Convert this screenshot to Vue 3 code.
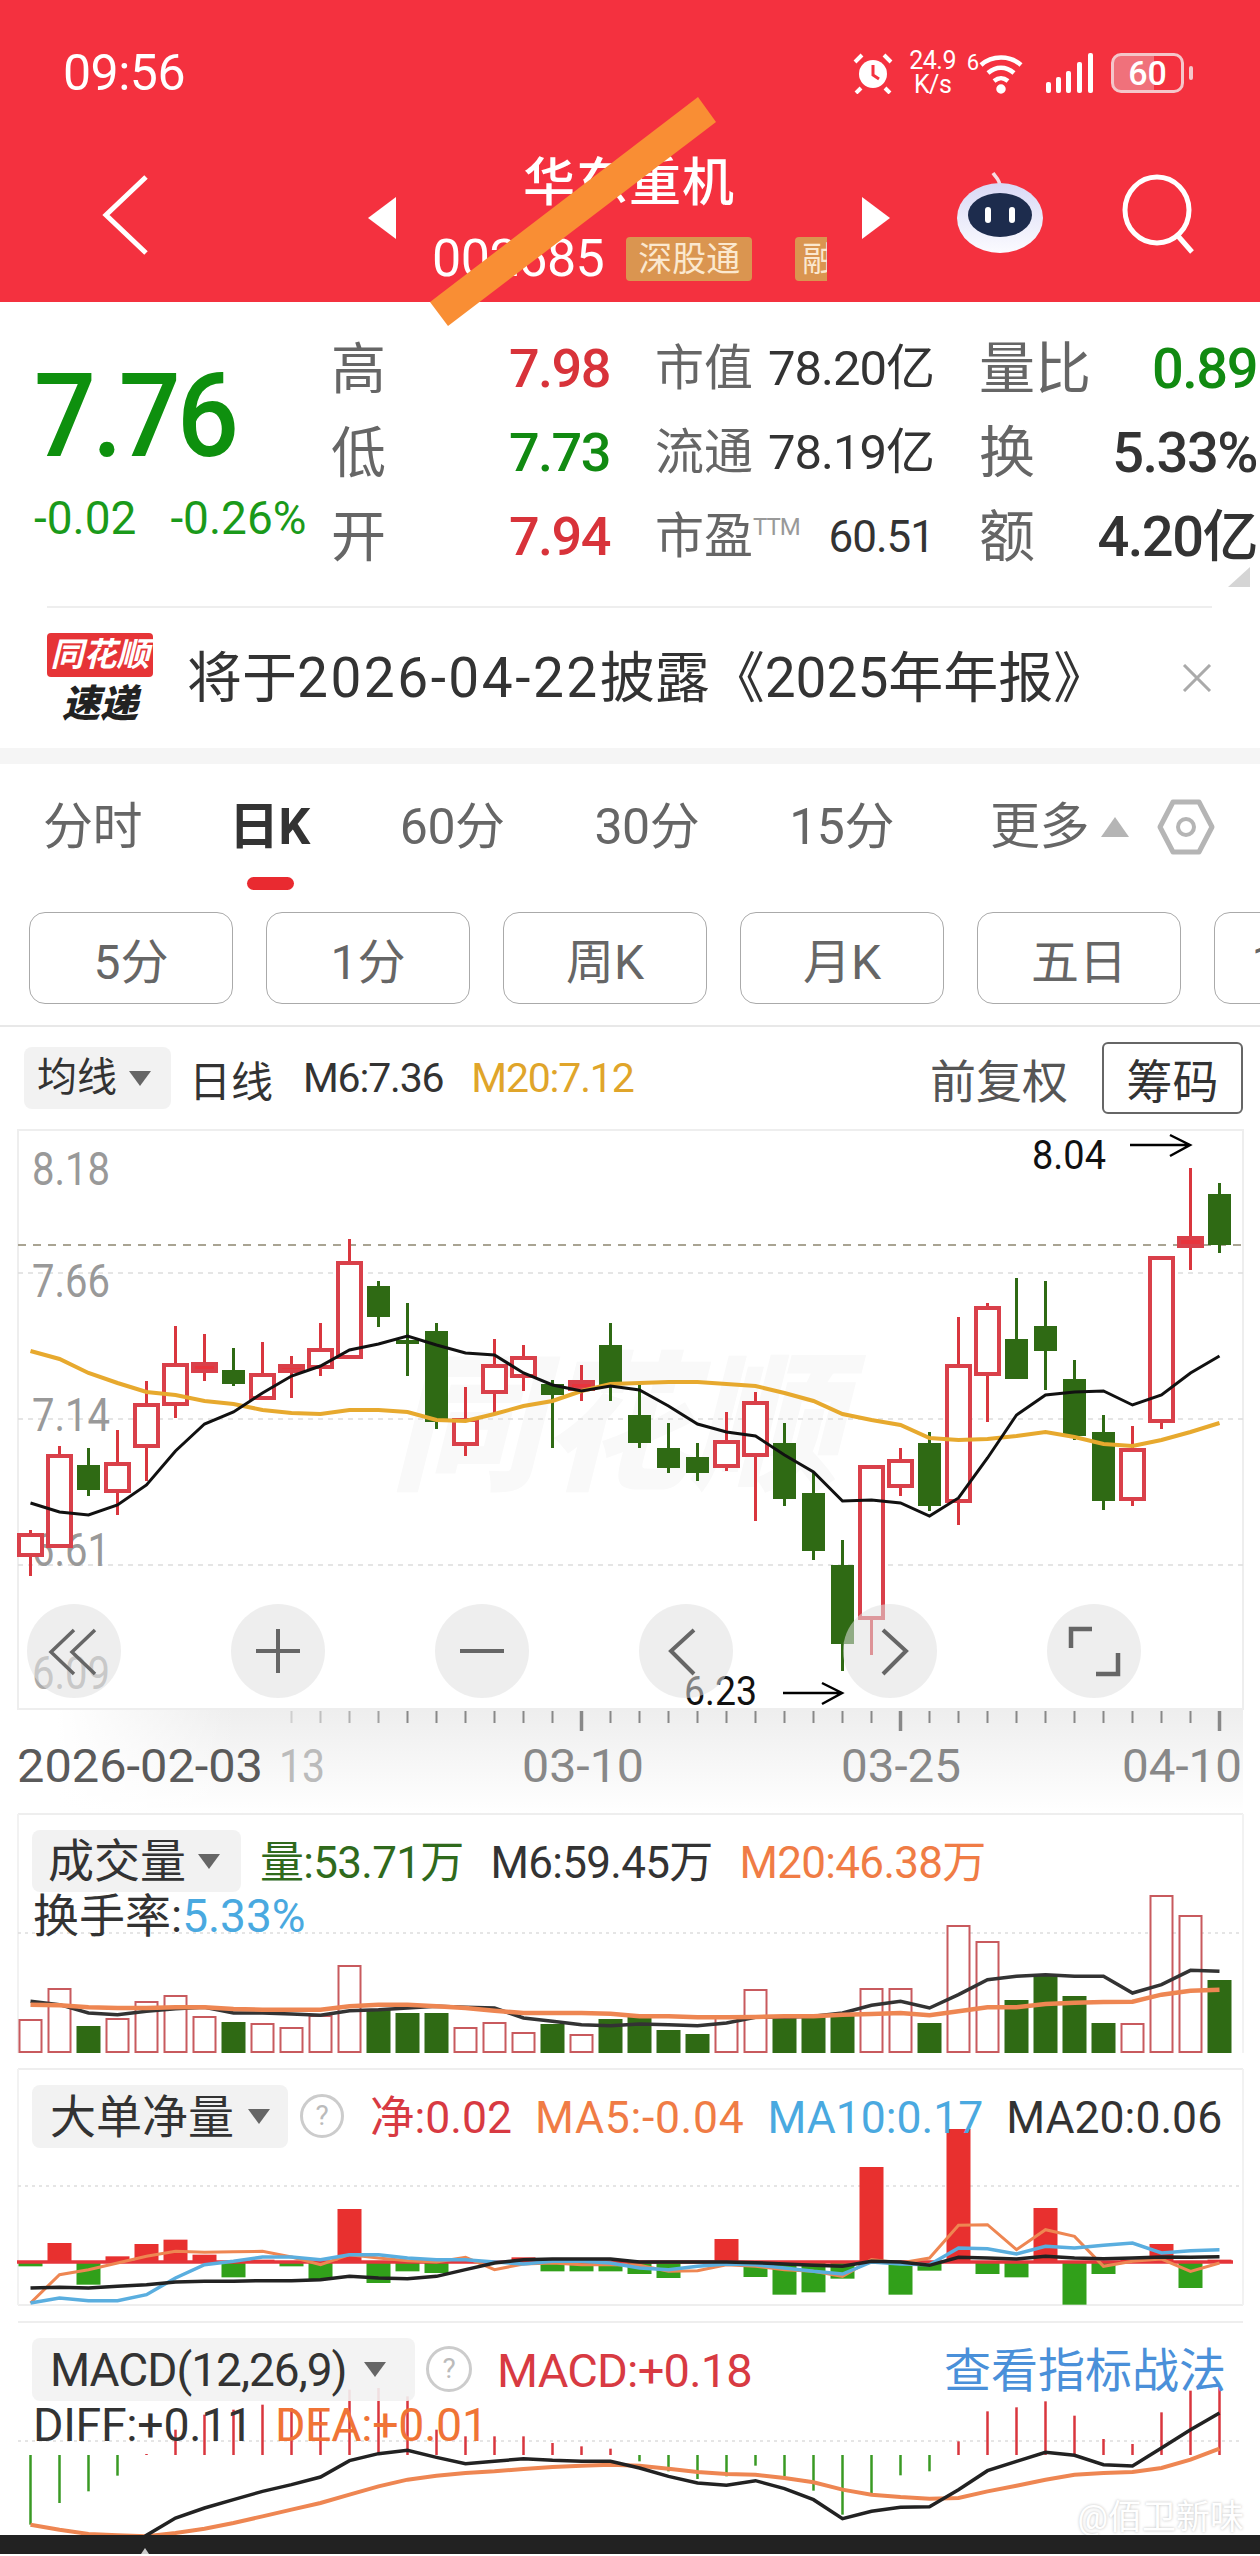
<template>
  <div class="phone">
    <header class="top">
      <div class="status">
        <span class="time">09:56</span>
        <div class="status-icons">
          <svg width="40" height="42" viewBox="0 0 40 42">
            <circle cx="20" cy="22" r="14" fill="#fff" />
            <path d="M20 13v10l6 4" stroke="#f4313f" stroke-width="3" fill="none" />
            <path d="M2 10 9 3M38 10 31 3M8 36l-5 5M32 36l5 5" stroke="#fff" stroke-width="4" />
          </svg>
          <div class="speed"><span>24.9</span><span>K/s</span></div>
          <span class="six">6</span>
          <svg width="44" height="42" viewBox="0 0 44 42" fill="none" stroke="#fff" stroke-width="4.5">
            <path d="M2 13C13 3 31 3 42 13" />
            <path d="M9 21c8-7 18-7 26 0" />
            <path d="M15 29c5-4 9-4 14 0" />
            <circle cx="22" cy="37" r="2.5" fill="#fff" />
          </svg>
          <svg class="signal" width="48" height="40" viewBox="0 0 48 40" fill="#fff">
            <rect x="0" y="29" width="5" height="11" rx="2" />
            <rect x="10" y="24" width="5" height="16" rx="2" />
            <rect x="20" y="18" width="5" height="22" rx="2" />
            <rect x="31" y="9" width="5" height="31" rx="2" />
            <rect x="42" y="0" width="5" height="40" rx="2" />
          </svg>
          <div class="battery"><span>60</span></div>
          <i class="nub"></i>
        </div>
      </div>
      <nav class="nav">
        <svg class="back" width="50" height="84" viewBox="0 0 50 84" fill="none" stroke="#fff" stroke-width="5">
          <path d="M45 3 5 41l40 38" />
        </svg>
        <i class="tri tri-left"></i>
        <div class="stock">
          <div class="stock-name">华东重机</div>
          <div class="stock-code">
            <span>002685</span>
            <em class="tag">深股通</em>
            <em class="tag tag-cut">融</em>
          </div>
        </div>
        <i class="tri tri-right"></i>
        <svg class="robot" width="90" height="82" viewBox="0 0 90 82">
          <defs>
            <linearGradient id="robotHead" x1="0" y1="0" x2="0" y2="1">
              <stop offset="0" stop-color="#d9d9f5" />
              <stop offset="1" stop-color="#fbfbff" />
            </linearGradient>
          </defs>
          <path d="M44 16C44 8 40 7 37 2" stroke="#f7dbe2" stroke-width="3.5" fill="none" />
          <ellipse cx="44" cy="47" rx="43" ry="35" fill="url(#robotHead)" />
          <ellipse cx="44" cy="44" rx="32" ry="22" fill="#1d2c4d" />
          <rect x="29" y="36" width="6" height="16" rx="3" fill="#fff" />
          <rect x="53" y="36" width="6" height="16" rx="3" fill="#fff" />
        </svg>
        <svg class="search" width="76" height="82" viewBox="0 0 76 82" fill="none" stroke="#fff" stroke-width="5">
          <ellipse cx="35" cy="36" rx="32" ry="33" />
          <path d="M56 62 70 78" />
        </svg>
      </nav>
    </header>

    <section class="quote">
      <div class="price">
        <div class="price-now">7.76</div>
        <div class="price-change"><span>-0.02</span><span>-0.26%</span></div>
      </div>
      <div class="quote-grid">
        <template v-for="row in quoteRows" :key="row.low">
          <div v-for="cell in row.cells" :key="cell.label" class="cell" :class="cell.cls">
            <span class="cell-label">{{ cell.label }}<sup v-if="cell.sup">{{ cell.sup }}</sup></span>
            <span class="cell-value" :class="cell.tone">{{ cell.value }}</span>
          </div>
        </template>
      </div>
      <i class="corner"></i>
    </section>

    <section class="news">
      <div class="news-logo">
        <div class="news-logo-top">同花顺</div>
        <div class="news-logo-bottom">速递</div>
      </div>
      <p class="news-text">将于<span class="news-date">2026-04-22</span>披露《2025年年报》</p>
      <svg class="news-close" width="30" height="28" viewBox="0 0 30 28" stroke="#aaa" stroke-width="3">
        <path d="M2 1 28 27M28 1 2 27" />
      </svg>
    </section>
    <div class="band"></div>

    <div class="tabs">
      <span v-for="tab in tabs" :key="tab" class="tab" :class="{ active: tab === '日K', more: tab === '更多' }">{{ tab }}</span>
      <i class="tab-up"></i>
      <svg class="hex" width="58" height="56" viewBox="0 0 58 56" fill="none" stroke="#b5b5b5">
        <path d="M16 3h26l13 25-13 25H16L3 28z" stroke-width="5" stroke-linejoin="round" />
        <circle cx="29" cy="28" r="8" stroke-width="4" />
      </svg>
    </div>
    <div class="periods">
      <button v-for="p in periods" :key="p" class="period">{{ p }}</button>
    </div>

    <div class="kline-head">
      <div class="chip chip-ma">均线<i class="caret"></i></div>
      <span class="kl-day">日线</span>
      <span class="kl-m6">M6:7.36</span>
      <span class="kl-m20">M20:7.12</span>
      <span class="kl-adj">前复权</span>
      <button class="kl-chip">筹码</button>
    </div>

    <div class="kline">
      <svg class="chart" width="1260" height="581" viewBox="0 1131 1260 581">
        <rect x="18" y="1132" width="1225" height="579" fill="#fff" stroke="#eee" stroke-width="2" />
        <text x="390" y="1480" class="mark">同花顺</text>
        <path v-for="y in [1275, 1421, 1567]" :key="y" :d="`M18 ${y}H1243`" stroke="#ddd" stroke-width="1.5" stroke-dasharray="5 5" />
        <path d="M18 1247H1243" stroke="#a9a493" stroke-width="2" stroke-dasharray="8 7" />
        <text v-for="l in priceLabels" :key="l.t" x="32" :y="l.y" :fill="l.c" class="axis-num" textLength="78" lengthAdjust="spacingAndGlyphs">{{ l.t }}</text>
        <g v-for="c in candles" :key="c.x">
          <path :d="`M${c.x} ${c.hi}V${c.lo}`" :stroke="c.up ? '#d9363e' : '#2f6a14'" stroke-width="3" />
          <rect
            v-if="c.up"
            :x="c.x - 11.5"
            :y="c.top"
            width="23"
            :height="c.bot - c.top"
            :fill="c.bot - c.top < 12 ? '#e8343c' : '#fff'"
            stroke="#d9404a"
            stroke-width="4"
          />
          <rect v-else :x="c.x - 11.5" :y="c.top" width="23" :height="c.bot - c.top" fill="#2f6a14" />
        </g>
        <polyline :points="m20Line" fill="none" stroke="#e7a92e" stroke-width="4" />
        <polyline :points="m6Line" fill="none" stroke="#111" stroke-width="3" />
        <text x="1032" y="1171" class="peak" textLength="74" lengthAdjust="spacingAndGlyphs">8.04</text>
        <path d="M1130 1147h59M1170 1137l20 10-20 11" fill="none" stroke="#000" stroke-width="2.5" />
        <text x="684" y="1707" class="peak" textLength="73" lengthAdjust="spacingAndGlyphs">6.23</text>
        <path d="M783 1695h59M822 1685l20 10-20 11" fill="none" stroke="#000" stroke-width="2.5" />
      </svg>
      <div class="kline-tools">
        <span v-for="t in tools" :key="t.name" class="tool">
          <svg width="94" height="94" viewBox="0 0 94 94" fill="none" stroke="#666" :stroke-width="t.w">
            <path :d="t.d" />
          </svg>
        </span>
      </div>
    </div>

    <div class="axis">
      <svg class="chart" width="1226" height="103" viewBox="17 1712 1226 103">
        <path v-for="t in ticks" :key="t.x" :d="`M${t.x} 1713V${t.end}`" stroke="#888" :stroke-width="t.w" :opacity="t.o" />
        <text x="17" y="1784" class="date date-first" textLength="246" lengthAdjust="spacingAndGlyphs">2026-02-03</text>
        <text x="279" y="1784" class="date date-fade" textLength="46" lengthAdjust="spacingAndGlyphs">13</text>
        <text x="522" y="1784" class="date" textLength="122" lengthAdjust="spacingAndGlyphs">03-10</text>
        <text x="841" y="1784" class="date" textLength="120" lengthAdjust="spacingAndGlyphs">03-25</text>
        <text x="1122" y="1784" class="date" textLength="120" lengthAdjust="spacingAndGlyphs">04-10</text>
      </svg>
    </div>

    <div class="panel panel-vol">
      <svg class="chart" width="1260" height="240" viewBox="0 1815 1260 240">
        <path d="M18 1816H1243" stroke="#eee" stroke-width="2" />
        <path d="M18 1816V2055M1243 1816V2055" stroke="#f2f2f2" stroke-width="2" />
        <path d="M18 1935H1243" stroke="#ddd" stroke-width="1.5" stroke-dasharray="3 4" />
        <template v-for="b in volBars" :key="b.x">
          <rect v-if="b.up" :x="b.x - 11" :y="b.top" width="22" :height="2054 - b.top" fill="#fff" stroke="#c85a5e" stroke-width="2" />
          <rect v-else :x="b.x - 12" :y="b.top" width="24" :height="2055 - b.top" fill="#2f6a14" />
        </template>
        <polyline :points="volM6" fill="none" stroke="#333" stroke-width="3.5" />
        <polyline :points="volM20" fill="none" stroke="#ee8652" stroke-width="4.5" />
      </svg>
      <div class="legend">
        <div class="chip chip-vol">成交量<i class="caret"></i></div>
        <div class="legend-col">
          <div class="legend-row">
            <span class="c-green">量:53.71万</span>
            <span class="c-dark">M6:59.45万</span>
            <span class="c-orange">M20:46.38万</span>
          </div>
        </div>
      </div>
      <div class="legend-second c-dark">换手率:<span class="c-blue">5.33%</span></div>
    </div>

    <div class="panel panel-net">
      <svg class="chart" width="1260" height="238" viewBox="0 2070 1260 238">
        <path d="M18 2071H1243M18 2307H1243" stroke="#eee" stroke-width="2" />
        <path d="M18 2071V2307M1243 2071V2307" stroke="#f2f2f2" stroke-width="2" />
        <path d="M18 2188H1243" stroke="#ddd" stroke-width="1.5" stroke-dasharray="3 4" />
        <rect v-for="b in netBars" :key="b.x" :x="b.x - 12" :y="b.y" width="24" :height="b.h" :fill="b.up ? '#e8302f' : '#31a01a'" />
        <path d="M17 2264H1233" stroke="#e4343a" stroke-width="3.5" />
        <polyline :points="netMa5" fill="none" stroke="#ee8652" stroke-width="3" />
        <polyline :points="netMa10" fill="none" stroke="#5aaedf" stroke-width="3.5" />
        <polyline :points="netMa20" fill="none" stroke="#222" stroke-width="3.5" />
      </svg>
      <div class="legend">
        <div class="chip chip-net">大单净量<i class="caret"></i></div>
        <span class="qmark">?</span>
        <div class="legend-row legend-row-net">
          <span class="c-red">净:0.02</span>
          <span class="c-orange net-ma5">MA5:-0.04</span>
          <span class="c-blue">MA10:0.17</span>
          <span class="c-dark">MA20:0.06</span>
        </div>
      </div>
    </div>

    <div class="panel panel-macd">
      <svg class="chart" width="1260" height="214" viewBox="0 2323 1260 214">
        <path d="M18 2324H1243" stroke="#eee" stroke-width="2" />
        <path d="M18 2443H1243" stroke="#ddd" stroke-width="1.5" stroke-dasharray="3 4" />
        <path v-for="b in macdBars" :key="b.x" :d="`M${b.x} 2457V${b.end}`" :stroke="b.up ? '#d9363e' : '#3a9a24'" stroke-width="2.5" />
        <polyline :points="macdDea" fill="none" stroke="#ee8652" stroke-width="4" />
        <polyline :points="macdDiff" fill="none" stroke="#222" stroke-width="3.5" />
      </svg>
      <div class="legend">
        <div class="chip chip-macd">MACD(12,26,9)<i class="caret"></i></div>
        <span class="qmark qmark-lg">?</span>
        <span class="c-red macd-val">MACD:+0.18</span>
        <span class="macd-link">查看指标战法</span>
      </div>
      <div class="legend-second legend-macd">
        <span class="c-dark">DIFF:+0.11</span>
        <span class="c-orange2">DEA:+0.01</span>
      </div>
      <div class="credit">@佰卫新味</div>
    </div>

    <footer class="bottom"><i></i></footer>

    <svg class="stripe" width="300" height="240" viewBox="0 0 300 240">
      <polygon points="272,2 290,27 22,231 4,207" fill="#f98e34" />
    </svg>
  </div>
</template>

<script setup>
const quoteRows = [
  {
    low: 'high',
    cells: [
      { label: '高', value: '7.98', tone: 'c-up', cls: 'c1' },
      { label: '市值', value: '78.20亿', tone: 'c-text', cls: 'c2' },
      { label: '量比', value: '0.89', tone: 'c-down', cls: 'c3' },
    ],
  },
  {
    low: 'low',
    cells: [
      { label: '低', value: '7.73', tone: 'c-down', cls: 'c1' },
      { label: '流通', value: '78.19亿', tone: 'c-text', cls: 'c2' },
      { label: '换', value: '5.33%', tone: 'c-text', cls: 'c3' },
    ],
  },
  {
    low: 'open',
    cells: [
      { label: '开', value: '7.94', tone: 'c-up', cls: 'c1' },
      { label: '市盈', sup: 'TTM', value: '60.51', tone: 'c-text', cls: 'c2 small' },
      { label: '额', value: '4.20亿', tone: 'c-text', cls: 'c3' },
    ],
  },
]

const tabs = ['分时', '日K', '60分', '30分', '15分', '更多']
const periods = ['5分', '1分', '周K', '月K', '五日', '120分']

const tools = [
  { name: 'start', w: 3.5, d: 'M47 26 24 48l23 22M68 26 45 48l23 22' },
  { name: 'plus', w: 4, d: 'M25 47h44M47 25v44' },
  { name: 'minus', w: 4, d: 'M25 47h44' },
  { name: 'left', w: 4, d: 'M55 26 32 47l23 23' },
  { name: 'right', w: 4, d: 'M40 26l23 21-23 23' },
  { name: 'full', w: 4.5, d: 'M24 44V25h21M49 70h22V49' },
]

const priceLabels = [
  { t: '8.18', y: 1187, c: '#999' },
  { t: '7.66', y: 1299, c: '#999' },
  { t: '7.14', y: 1433, c: '#999' },
  { t: '6.61', y: 1568, c: '#999' },
  { t: '6.09', y: 1691, c: '#aaa' },
]

const xAt = (i) => 30.5 + 29 * i

// hi, top, bottom, lo, up
const raw = [
  [1532, 1537, 1557, 1578, 1], [1448, 1458, 1548, 1550, 1], [1450, 1467, 1492, 1498, 0],
  [1432, 1466, 1493, 1517, 1], [1383, 1407, 1448, 1483, 1], [1328, 1367, 1406, 1420, 1],
  [1336, 1366, 1373, 1383, 1], [1350, 1372, 1386, 1388, 0], [1344, 1377, 1400, 1401, 1],
  [1358, 1368, 1373, 1400, 1], [1325, 1352, 1369, 1378, 1], [1241, 1265, 1359, 1359, 1],
  [1283, 1288, 1319, 1329, 0], [1305, 1342, 1346, 1378, 0], [1325, 1333, 1424, 1431, 0],
  [1389, 1422, 1446, 1458, 1], [1341, 1368, 1394, 1417, 1], [1347, 1360, 1378, 1393, 1],
  [1382, 1386, 1397, 1450, 0], [1367, 1384, 1391, 1403, 1], [1325, 1347, 1387, 1403, 0],
  [1387, 1417, 1445, 1450, 0], [1425, 1450, 1470, 1475, 0], [1445, 1459, 1475, 1483, 0],
  [1414, 1444, 1468, 1473, 1], [1394, 1405, 1457, 1523, 1], [1425, 1445, 1501, 1508, 0],
  [1475, 1495, 1553, 1562, 0], [1542, 1567, 1646, 1673, 0], [1469, 1469, 1620, 1657, 1],
  [1450, 1463, 1488, 1498, 1], [1434, 1445, 1508, 1513, 0], [1319, 1368, 1503, 1527, 1],
  [1305, 1310, 1376, 1424, 1], [1280, 1341, 1381, 1381, 0], [1283, 1328, 1353, 1392, 0],
  [1362, 1381, 1438, 1442, 0], [1417, 1434, 1503, 1512, 0], [1428, 1452, 1501, 1508, 1],
  [1258, 1260, 1423, 1431, 1], [1170, 1240, 1248, 1272, 1], [1185, 1196, 1247, 1255, 0],
]
const candles = raw.map((r, i) => ({ x: xAt(i), hi: r[0], top: r[1], bot: r[2], lo: r[3], up: r[4] === 1 }))

const toLine = (ys, start = 0) => ys.map((y, i) => `${xAt(i + start)},${y}`).join(' ')

const m6Line = toLine([
  1505, 1514, 1517, 1507, 1487, 1453, 1426, 1414, 1395, 1378, 1368, 1352, 1346, 1338, 1347, 1355, 1357, 1375, 1387, 1393,
  1388, 1392, 1408, 1426, 1434, 1438, 1457, 1474, 1503, 1502, 1505, 1518, 1500, 1460, 1417, 1397, 1394, 1393, 1407, 1397,
  1375, 1358,
])
const m20Line = toLine([
  1353, 1361, 1375, 1385, 1394, 1397, 1403, 1406, 1412, 1415, 1416, 1412, 1412, 1414, 1422, 1423, 1416, 1408, 1403, 1393,
  1386, 1385, 1384, 1384, 1386, 1388, 1395, 1403, 1416, 1422, 1427, 1440, 1442, 1441, 1438, 1434, 1439, 1446, 1448, 1442,
  1434, 1425,
])

const ticks = []
for (let i = 9; i <= 41; i++) {
  const major = i === 19 || i === 30 || i === 41
  ticks.push({ x: xAt(i), end: major ? 1733 : 1725, w: major ? 3.5 : 2, o: i < 13 ? 0.3 + (i - 9) * 0.15 : 1 })
}

const volTop = [
  2022, 1991, 2028, 2021, 2004, 1998, 2019, 2024, 2026, 2030, 2018, 1968, 2012, 2015, 2015, 2030, 2025, 2035, 2026, 2037,
  2021, 2018, 2032, 2036, 2018, 1992, 2017, 2018, 2017, 1991, 1991, 2025, 1928, 1944, 2002, 1978, 1998, 2025, 2026, 1898,
  1918, 1982,
]
const volGreen = [2, 7, 12, 13, 14, 18, 20, 21, 22, 23, 26, 27, 28, 31, 34, 35, 36, 37, 41]
const volBars = volTop.map((top, i) => ({ x: xAt(i), top, up: !volGreen.includes(i) }))

// the two panels below were read off a 3x crop, hence the z / 3
const zLine = (base, zs, start = 0) => toLine(zs.map((z) => base + z / 3), start)

const volM6 = zLine(1800, [
  610, 620, 645, 650, 640, 632, 628, 645, 645, 648, 652, 638, 635, 630, 625, 628, 630, 660, 670, 680, 683, 678, 680, 683,
  675, 658, 658, 655, 645, 622, 610, 630, 590, 545, 535, 530, 535, 535, 585, 560, 517, 520,
])
const volM20 = zLine(1800, [
  620, 622, 628, 630, 630, 628, 628, 633, 635, 635, 635, 625, 620, 620, 625, 630, 638, 645, 645, 645, 647, 655, 655, 658,
  658, 657, 655, 655, 650, 648, 645, 652, 640, 628, 628, 618, 614, 612, 611, 590, 578, 575,
])

const netZ = [
  625, 555, 680, 595, 558, 545, 590, 658, 605, 625, 665, 453, 675, 640, 645, 605, 610, 598, 640, 640, 640, 648, 660, 610,
  543, 657, 710, 703, 662, 327, 710, 638, 213, 648, 658, 450, 740, 648, 605, 558, 690, 605,
]
const netBars = netZ.map((z, i) => {
  const y = 2060 + z / 3
  return z < 612 ? { x: xAt(i), y, h: 2264 - y, up: true } : { x: xAt(i), y: 2264, h: y - 2264, up: false }
})
const netMa5 = zLine(2060, [
  735, 650, 635, 615, 595, 580, 583, 581, 580, 597, 620, 590, 600, 608, 612, 598, 635, 618, 615, 620, 620, 622, 640, 638,
  620, 625, 635, 640, 655, 605, 615, 600, 502, 500, 575, 515, 535, 625, 610, 603, 640, 615,
])
const netMa10 = zLine(2060, [
  735, 720, 728, 728, 710, 660, 620, 610, 597, 597, 605, 590, 590, 600, 605, 605, 612, 618, 610, 610, 615, 630, 635, 625,
  618, 620, 630, 640, 648, 612, 618, 620, 570, 572, 588, 565, 570, 562, 555, 585, 578, 575,
])
const netMa20 = zLine(2060, [
  690, 688, 690, 685, 680, 672, 670, 670, 668, 668, 665, 655, 660, 662, 655, 635, 615, 605, 603, 603, 603, 612, 612, 612,
  612, 614, 618, 622, 625, 610, 612, 622, 598, 600, 603, 595, 600, 602, 600, 597, 598, 596,
])

const macdZ = [
  680, 615, 580, 533, 468, 395, 350, 335, 320, 330, 335, 275, 270, 295, 395, 415, 415, 415, 435, 445, 452, 490, 520, 543,
  535, 503, 535, 578, 650, 585, 532, 520, 430, 340, 328, 310, 353, 423, 438, 343, 278, 265,
]
const macdBars = macdZ.map((z, i) => ({ x: xAt(i), end: 2300 + z / 3, up: z < 470 }))
const macdDiff = zLine(2300, [
  770, 770, 770, 770, 712, 660, 630, 605, 580, 560, 537, 488, 467, 457, 478, 497, 490, 482, 487, 490, 490, 510, 535, 555,
  562, 548, 572, 605, 662, 640, 628, 626, 575, 518, 490, 463, 472, 500, 504, 450, 395, 345,
])
const macdDea = zLine(2300, [
  680, 695, 708, 712, 715, 705, 692, 675, 655, 635, 615, 590, 565, 545, 533, 525, 520, 513, 507, 503, 500, 503, 512, 522,
  528, 530, 540, 553, 575, 590, 597, 602, 600, 580, 563, 545, 530, 525, 522, 510, 485, 452,
])
</script>

<style>
html,
body {
  margin: 0;
  background: #fff;
}
</style>

<style scoped>
.phone {
  position: relative;
  width: 1260px;
  height: 2556px;
  overflow: hidden;
  background: #fff;
  font-family: Roboto, "Noto Sans CJK SC", sans-serif;
  color: #333;
}

.phone i,
.phone em {
  font-style: normal;
}

.top {
  height: 302px;
  background: #f4313f;
  color: #fff;
}

.status {
  display: flex;
  justify-content: space-between;
  height: 130px;
  box-sizing: border-box;
  padding: 48px 67px 0 63px;
}

.time {
  font-size: 50px;
  line-height: 50px;
  letter-spacing: -0.5px;
}

.status-icons {
  display: flex;
  align-items: center;
  height: 44px;
  margin-top: 3px;
}

.speed {
  display: flex;
  flex-direction: column;
  align-items: center;
  margin-left: 12px;
  width: 56px;
  font-size: 25px;
  line-height: 24px;
  letter-spacing: -0.5px;
}

.six {
  font-size: 22px;
  line-height: 20px;
  align-self: flex-start;
  margin: 2px 0 0 6px;
}

.signal {
  margin-left: 23px;
}

.battery {
  display: flex;
  align-items: center;
  justify-content: center;
  width: 73px;
  height: 40px;
  box-sizing: border-box;
  margin-left: 17px;
  border: 3px solid #f4c6ca;
  border-radius: 10px;
  background: linear-gradient(90deg, #f0717b 60%, transparent 60%);
  font-size: 34px;
  font-weight: 500;
}

.nub {
  width: 4px;
  height: 14px;
  margin-left: 5px;
  border-radius: 2px;
  background: #f4c6ca;
}

.nav {
  display: flex;
  align-items: center;
  height: 127px;
  padding-top: 24px;
}

.back {
  margin: 0 0 4px 101px;
}

.tri {
  width: 0;
  height: 0;
  border-top: 21px solid transparent;
  border-bottom: 21px solid transparent;
}

.tri-left {
  margin-left: 217px;
  border-right: 28px solid #fff;
}

.tri-right {
  border-left: 28px solid #fff;
}

.stock {
  width: 466px;
}

.stock-name {
  font-size: 52px;
  line-height: 60px;
  font-weight: 500;
  text-align: center;
  letter-spacing: 1px;
}

.stock-code {
  display: flex;
  align-items: center;
  width: 395px;
  height: 44px;
  margin: 23px 0 0 36px;
  overflow: hidden;
  font-size: 52px;
  line-height: 44px;
  letter-spacing: -0.5px;
}

.tag {
  flex: none;
  width: 126px;
  height: 44px;
  margin-left: 22px;
  border-radius: 4px;
  background: #da9550;
  color: #fbe8cf;
  font-size: 34px;
  text-align: center;
  letter-spacing: 0;
}

.tag-cut {
  margin-left: 43px;
  padding-left: 7px;
  text-align: left;
  box-sizing: border-box;
}

.robot {
  margin: 0 0 12px 66px;
}

.search {
  margin: 0 0 6px 76px;
}

.stripe {
  position: absolute;
  top: 95px;
  left: 426px;
}

.quote {
  position: relative;
  display: flex;
  height: 304px;
  box-sizing: border-box;
  border-bottom: 2px solid transparent;
}

.price {
  width: 333px;
  flex: none;
  box-sizing: border-box;
  padding: 56px 0 0 34px;
}

.price-now {
  font-size: 116px;
  line-height: 116px;
  font-weight: 500;
  color: #0e900e;
  letter-spacing: -4px;
  transform: scaleX(0.94);
  transform-origin: left center;
}

.price-change {
  display: flex;
  gap: 34px;
  margin-top: 19px;
  font-size: 46px;
  line-height: 50px;
  color: #1a9a1a;
}

.quote-grid {
  display: grid;
  grid-template-columns: 277px 277px 276px;
  column-gap: 47px;
  grid-auto-rows: 84px;
  padding-top: 25px;
}

.cell {
  display: flex;
  justify-content: space-between;
  align-items: center;
}

.cell-label {
  font-size: 55px;
  line-height: 60px;
  color: #666;
  margin-left: -2px;
}

.c2 .cell-label {
  font-size: 49px;
}

.c3 .cell-label {
  font-size: 56px;
}

.cell sup {
  font-size: 24px;
  line-height: 24px;
  vertical-align: 18px;
  letter-spacing: -1px;
  color: #999;
}

.cell-value {
  font-size: 54px;
  line-height: 60px;
  letter-spacing: -1.5px;
  white-space: nowrap;
}

.c2 .cell-value {
  font-size: 49px;
  letter-spacing: -1px;
}

.small .cell-value {
  font-size: 44px;
}

.c3 .cell-value {
  font-size: 56px;
  font-weight: 500;
}

.c1 .cell-value {
  font-weight: 500;
}

.c-up {
  color: #d8333a;
}

.c-down {
  color: #118a11;
}

.c-text {
  color: #333;
}

.corner {
  position: absolute;
  right: 10px;
  bottom: 17px;
  width: 0;
  height: 0;
  border-left: 22px solid transparent;
  border-bottom: 20px solid #d5d5d5;
}

.news {
  display: flex;
  align-items: center;
  height: 140px;
  margin: 0 48px 0 47px;
  border-top: 2px solid #eee;
}

.news-logo {
  width: 106px;
  flex: none;
  text-align: center;
}

.news-logo-top {
  height: 44px;
  border-radius: 4px;
  background: #e63437;
  color: #fff;
  font-size: 33px;
  line-height: 44px;
  font-weight: 700;
  font-style: italic;
}

.news-logo-bottom {
  margin-top: 8px;
  font-size: 38px;
  line-height: 38px;
  font-weight: 900;
  font-style: italic;
  color: #222;
}

.news-text {
  margin: 0 0 0 34px;
  flex: 1;
  font-size: 55px;
  line-height: 64px;
  color: #333;
  white-space: nowrap;
}

.news-date {
  letter-spacing: 2.5px;
}

.band {
  height: 16px;
  background: #f5f5f5;
}

.tabs {
  display: flex;
  align-items: center;
  gap: 90px;
  height: 126px;
  padding-left: 43px;
  box-sizing: border-box;
}

.tab {
  position: relative;
  font-size: 50px;
  line-height: 60px;
  color: #666;
  letter-spacing: -0.5px;
}

.tab.active {
  margin-left: -3px;
  font-weight: 700;
  color: #333;
}

.tab.more {
  margin-left: 6px;
}

.tab.active::after {
  content: "";
  position: absolute;
  left: 18px;
  bottom: -33px;
  width: 47px;
  height: 13px;
  border-radius: 7px;
  background: #e92a30;
}

.tab-up {
  width: 0;
  height: 0;
  margin-left: -78px;
  border-left: 14px solid transparent;
  border-right: 14px solid transparent;
  border-bottom: 20px solid #b5b5b5;
}

.hex {
  margin-left: -62px;
}

.periods {
  display: flex;
  gap: 33px;
  height: 137px;
  padding: 22px 0 0 29px;
  box-sizing: border-box;
  overflow: hidden;
  border-bottom: 2px solid #e8e8e8;
}

.period {
  flex: none;
  width: 204px;
  height: 92px;
  padding: 0;
  border: 1.5px solid #aaa;
  border-radius: 16px;
  background: #fff;
  font-family: inherit;
  font-size: 48px;
  color: #666;
}

.kline-head {
  display: flex;
  align-items: center;
  height: 102px;
  padding: 0 17px 0 24px;
  box-sizing: border-box;
  font-size: 42px;
}

.chip {
  display: flex;
  flex: none;
  align-items: center;
  box-sizing: border-box;
  border-radius: 8px;
  background: #f2f2f2;
  color: #333;
}

.chip-ma {
  width: 147px;
  height: 62px;
  padding-left: 13px;
  font-size: 40px;
  line-height: 62px;
  gap: 12px;
}

.caret {
  width: 0;
  height: 0;
  border-left: 11px solid transparent;
  border-right: 11px solid transparent;
  border-top: 15px solid #666;
}

.kl-day {
  margin-left: 18px;
}

.kl-m6 {
  margin-left: 30px;
  font-size: 41px;
  letter-spacing: -1.2px;
}

.kl-m20 {
  margin-left: 28px;
  font-size: 41px;
  color: #e0a52a;
  letter-spacing: -1.2px;
}

.kl-adj {
  margin-left: auto;
  font-size: 46px;
  color: #555;
}

.kl-chip {
  width: 141px;
  height: 72px;
  margin-left: 34px;
  padding: 0;
  border: 2px solid #666;
  border-radius: 6px;
  background: #fff;
  font-family: inherit;
  font-size: 46px;
  color: #333;
}

.kline {
  position: relative;
  height: 581px;
}

.chart {
  display: block;
}

.mark {
  font-size: 150px;
  font-weight: 900;
  font-style: italic;
  fill: #f9f9f9;
}

.axis-num {
  font-size: 46px;
}

.peak {
  font-size: 40px;
  fill: #111;
}

.kline-tools {
  position: absolute;
  top: 475px;
  left: 27px;
  display: flex;
  gap: 110px;
}

.tool {
  display: block;
  width: 94px;
  height: 94px;
  border-radius: 50%;
  background: rgba(224, 224, 224, 0.55);
}

.tool svg {
  display: block;
}

.axis {
  width: 1226px;
  height: 103px;
  margin-left: 17px;
  background: linear-gradient(90deg, #fff 40px, rgba(255, 255, 255, 0) 220px), linear-gradient(180deg, #eee, #fafafa 70%, #fff);
}

.date {
  font-size: 46px;
  fill: #888;
}

.date-first {
  fill: #5a5a5a;
}

.date-fade {
  fill: #bbb;
}

.panel {
  position: relative;
}

.panel-vol {
  height: 255px;
}

.panel-net {
  height: 253px;
}

.panel-macd {
  height: 214px;
}

.legend {
  position: absolute;
  top: 17px;
  left: 32px;
  right: 17px;
  display: flex;
  align-items: flex-start;
  font-size: 44px;
  line-height: 66px;
}

.legend-row {
  display: flex;
  letter-spacing: -0.7px;
  white-space: nowrap;
}

.legend-col {
  margin-left: 19px;
}

.legend-row span + span {
  margin-left: 27px;
}

.legend-second {
  position: absolute;
  top: 79px;
  left: 33px;
  font-size: 46px;
  line-height: 48px;
  white-space: nowrap;
}

.chip-vol {
  width: 209px;
  height: 62px;
  padding-left: 16px;
  gap: 12px;
  font-size: 46px;
}

.chip-net {
  width: 256px;
  height: 63px;
  padding-left: 18px;
  gap: 14px;
  font-size: 46px;
}

.chip-macd {
  width: 383px;
  height: 63px;
  padding-left: 18px;
  gap: 17px;
  font-size: 46px;
  letter-spacing: -1px;
  background: rgba(242, 242, 242, 0.9);
}

.qmark {
  width: 38px;
  height: 38px;
  margin: 9px 0 0 12px;
  border: 3px solid #ccc;
  border-radius: 50%;
  color: #bbb;
  font-size: 28px;
  line-height: 38px;
  text-align: center;
  flex: none;
}

.qmark-lg {
  width: 40px;
  height: 40px;
  margin: 8px 0 0 11px;
  line-height: 40px;
}

.legend-row-net {
  margin-left: 26px;
  font-size: 44.5px;
  letter-spacing: 0;
}

.legend-row-net span + span {
  margin-left: 23px;
}

.legend-row-net .net-ma5 {
  letter-spacing: 0.7px;
}

.macd-val {
  margin-left: 25px;
  font-size: 47px;
  letter-spacing: -0.8px;
}

.macd-link {
  margin-left: auto;
  padding-right: 17px;
  font-size: 47px;
  color: #4a90d9;
}

.legend-macd {
  top: 80px;
  display: flex;
  gap: 22px;
  font-size: 46.5px;
  letter-spacing: -0.3px;
}

.credit {
  position: absolute;
  right: 16px;
  bottom: -2px;
  font-size: 34px;
  line-height: 40px;
  color: #fff;
  text-shadow: 0 0 3px #bbb;
}

.c-green {
  color: #2f6a1c;
}

.c-dark {
  color: #333;
}

.c-orange {
  color: #f07c45;
}

.c-orange2 {
  color: #f07436;
}

.c-blue {
  color: #4aa9e0;
}

.c-red {
  color: #d83a42;
}

.bottom {
  position: relative;
  height: 19px;
  background: #222;
}

.bottom i {
  position: absolute;
  left: 141px;
  top: 13px;
  width: 0;
  height: 0;
  border-left: 4px solid transparent;
  border-right: 4px solid transparent;
  border-bottom: 6px solid #ccc;
}
</style>
